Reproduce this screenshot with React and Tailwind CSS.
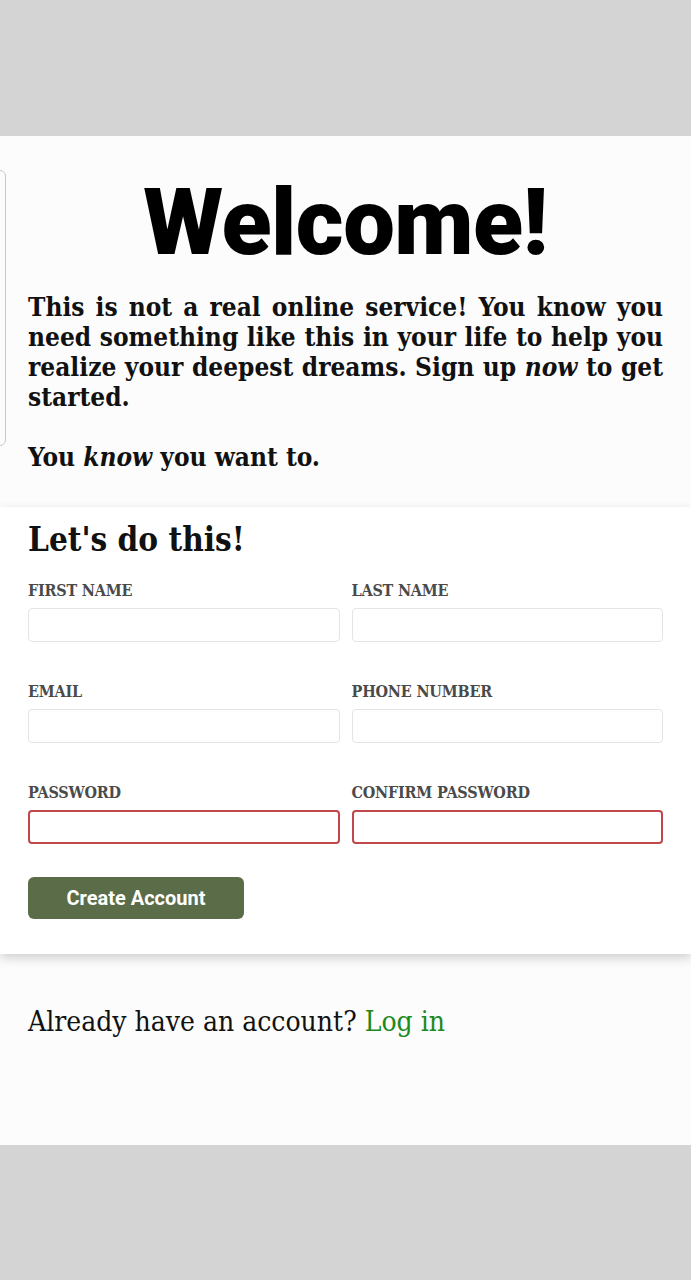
export default function App() {
    const serif = { fontFamily: '"DejaVu Serif Condensed", "DejaVu Serif", serif' };
    const fields = [
        ['FIRST NAME', 'LAST NAME', false],
        ['EMAIL', 'PHONE NUMBER', false],
        ['PASSWORD', 'CONFIRM PASSWORD', true],
    ];
    return (
        <div className="min-h-screen bg-[#d4d4d4] pt-[136px]" style={serif}>
            <main className="relative bg-[#fcfcfc] h-[1009px] flex flex-col">
                <div className="absolute left-[-8px] top-[34px] h-[276px] w-[14px] rounded-r-md border border-[#c9c9c9] bg-[#fcfcfc]" />

                <section className="px-7 pt-[41px] pb-[35px]">
                    <h1 className="text-center text-[92px] leading-none font-black tracking-[-0.5px] text-black" style={{ fontFamily: 'Roboto, sans-serif' }}>
                        Welcome!
                    </h1>
                    <p className="mt-[23px] text-[26px] leading-[30px] font-bold text-justify text-[#111]">
                        This is not a real online service! You know you need something like this in your life to help you realize your deepest dreams. Sign up <em>now</em> to get started.
                    </p>
                    <p className="mt-[30px] text-[26px] leading-[30px] font-bold text-[#111]">
                        You <em>know</em> you want to.
                    </p>
                </section>

                <section className="bg-white shadow-[0_4px_10px_rgba(0,0,0,0.18)] px-7 pt-[13px] pb-[35px]">
                    <h2 className="text-[33px] leading-[40px] font-bold text-[#111]">Let's do this!</h2>
                    <div className="mt-[20px] grid grid-cols-2 gap-x-3 gap-y-[39px]">
                        {fields.map(([a, b, bad]) => [a, b].map((label) => (
                            <label key={label} className="flex flex-col">
                                <span className="text-[16px] leading-[22px] font-bold text-[#4a4a4a] tracking-[-0.2px]">{label}</span>
                                <input
                                    type={bad ? 'password' : 'text'}
                                    className={`mt-[6px] h-[34px] rounded-[4px] border bg-white ${bad ? 'border-[#c0474a] border-[2px]' : 'border-[#e4e4e4]'}`}
                                />
                            </label>
                        )))}
                    </div>
                    <button
                        className="mt-[33px] h-[42px] w-[216px] rounded-[6px] bg-[#5a6d48] text-white text-[20px] font-bold"
                        style={{ fontFamily: 'Roboto, sans-serif' }}
                    >
                        Create Account
                    </button>
                </section>

                <p className="px-7 mt-[50px] text-[28px] leading-[36px] text-[#111]">
                    Already have an account? <a href="#" className="text-[#1d8a1d]">Log in</a>
                </p>
            </main>
        </div>
    );
}
